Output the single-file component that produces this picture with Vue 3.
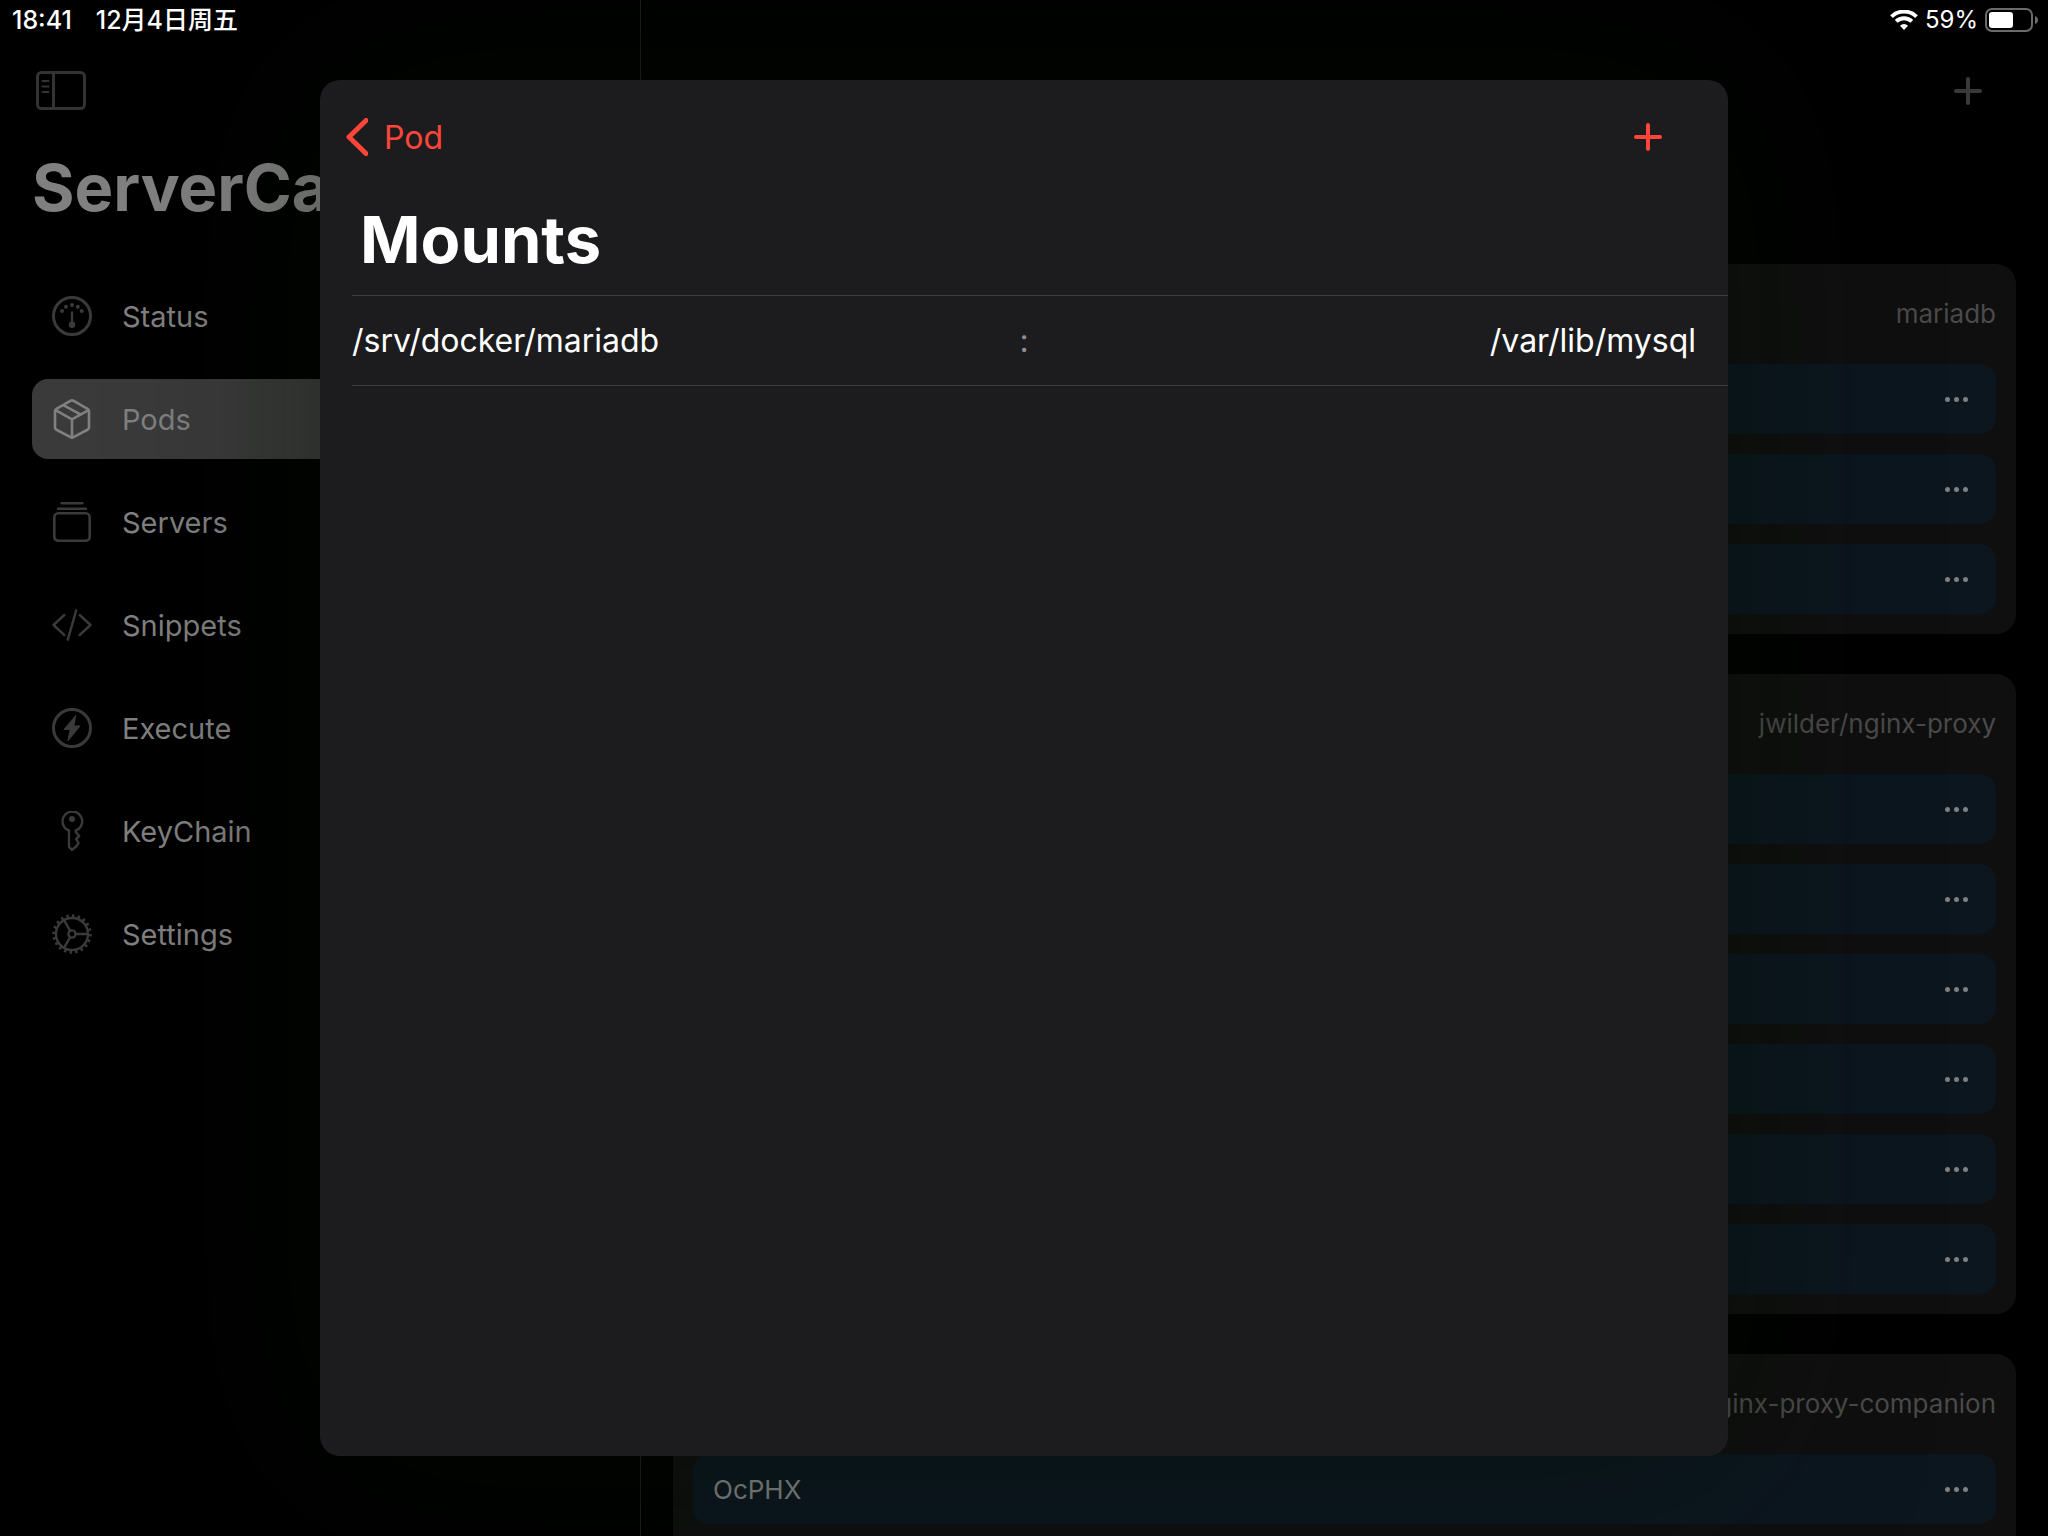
<template>
  <div class="app">
    <header class="statusbar">
      <div class="clock">
        <time>18:41</time>
        <span>12月4日周五</span>
      </div>
      <div class="power">
        <svg class="wifi" viewBox="0 0 28 20" aria-hidden="true">
          <path d="M1.5 6.600a18 18 0 0 1 25 0" />
          <path d="M6.200 11.400a11.200 11.200 0 0 1 15.600 0" />
          <path class="dot" d="M14 20l-4-4.200a5.600 5.600 0 0 1 8 0z" />
        </svg>
        <span class="percent">59%</span>
        <svg class="battery" viewBox="0 0 54 24" aria-hidden="true">
          <rect class="shell" x="1" y="1" width="46" height="22" rx="6" />
          <rect class="level" x="4" y="4" width="24" height="16" rx="3" />
          <path class="nub" d="M50 8q3 1 3 4t-3 4z" />
        </svg>
      </div>
    </header>

    <aside class="sidebar">
      <button class="toggle" aria-label="Toggle sidebar">
        <svg viewBox="0 0 50 40" aria-hidden="true">
          <rect x="1.5" y="1.5" width="47" height="36" rx="4" />
          <path d="M17.5 2v35" />
          <path class="thin" d="M6.500 10h6M6.500 15.500h6M6.500 21h6" />
        </svg>
      </button>
      <h1>ServerCat</h1>
      <nav class="nav">
        <a v-for="item in menu" :key="item.name" href="#" class="nav-item"
          :class="{ active: item.name === current }" @click.prevent="current = item.name">
          <svg viewBox="0 0 40 40" aria-hidden="true">
            <g v-if="item.name === 'Status'">
              <circle cx="20" cy="20" r="18.5" />
              <path class="thin" d="M20 16.5v12" />
              <g class="solid">
                <circle cx="10" cy="15" r="2" /><circle cx="14" cy="10.7" r="2" />
                <circle cx="20" cy="8.9" r="2" /><circle cx="25.8" cy="10.7" r="2" />
                <circle cx="29.7" cy="15" r="2" /><circle cx="20" cy="28.7" r="3.2" />
              </g>
            </g>
            <g v-else-if="item.name === 'Pods'" class="medium">
              <path d="M18.8 1.7q1.2-.7 2.4 0L36 10.2q1 .7 1 2v16.3q0 1.3-1.1 2L20 38.9 4 30.5q-1-.7-1-2V12.2q0-1.3 1-2z" />
              <path d="M3.5 11.2L20 20.3 36.5 11.2M20 20.3V38.5M11.8 6.3L28.800 15.700" />
            </g>
            <g v-else-if="item.name === 'Servers'" class="medium">
              <rect x="2.3" y="11.3" width="35.4" height="27.4" rx="4" />
              <path class="thin" d="M9.5 1.3h21M6 6.7h28" />
            </g>
            <path v-else-if="item.name === 'Snippets'" class="thin"
              d="M12.3 10L1.5 20l10.8 10M27.7 10l10.800 10-10.800 10M24.2 5.300L15.800 34.700" />
            <g v-else-if="item.name === 'Execute'">
              <circle cx="20" cy="20" r="18.5" />
              <path class="solid" d="M23.500 7.200q1-.7.8.6L22.400 17.400h5.300q1 .2.4 1.100L16.500 32.700q-1.200.8-1-.5l2.100-10.200h-5.300q-1-.2-.4-1.100z" />
            </g>
            <g v-else-if="item.name === 'KeyChain'" class="thin">
              <path d="M17 19.500A9.800 9.800 0 1 1 23.700 19.500V21l3.500 4-3 2.800 2.300 4.200-2 3.200L20 38.800l-3-3z" />
              <circle class="solid" cx="20" cy="8" r="3" />
            </g>
            <g v-else class="thin">
              <circle cx="20" cy="20" r="16" />
              <circle class="teeth" cx="20" cy="20" r="18.200" pathLength="60" />
              <circle cx="20" cy="20" r="3.600" />
              <path d="M23.600 20H36M18.200 16.900L12 6.200M18.200 23.100L12 33.800" />
            </g>
          </svg>
          <span>{{ item.name }}</span>
        </a>
      </nav>
    </aside>

    <main class="content">
      <div class="toolbar">
        <button class="add" aria-label="Add pod">
          <svg viewBox="0 0 28 28" aria-hidden="true"><path d="M14 2v24M2 14h24" /></svg>
        </button>
      </div>
      <section v-for="pod in pods" :key="pod.image" class="card">
        <header>{{ pod.image }}</header>
        <div v-for="(name, i) in pod.containers" :key="i" class="container">
          <span>{{ name }}</span>
          <button class="more" aria-label="More">
            <i></i><i></i><i></i>
          </button>
        </div>
      </section>
    </main>

    <div class="overlay">
      <div class="sheet" role="dialog" aria-modal="true" aria-labelledby="sheet-title">
        <div class="sheet-bar">
          <button class="back">
            <svg viewBox="0 0 22 38" aria-hidden="true"><path d="M20 2.500L3 19l17 16.500" /></svg>
            <span>Pod</span>
          </button>
          <button class="add" aria-label="Add mount">
            <svg viewBox="0 0 28 28" aria-hidden="true"><path d="M14 2v24M2 14h24" /></svg>
          </button>
        </div>
        <h2 id="sheet-title">Mounts</h2>
        <ul class="mounts">
          <li v-for="mount in mounts" :key="mount.target">
            <span>{{ mount.source }}</span>
            <span class="colon">:</span>
            <span class="target">{{ mount.target }}</span>
          </li>
        </ul>
      </div>
    </div>
  </div>
</template>

<script setup>
import { ref } from 'vue'

const current = ref('Pods')

const menu = [
  { name: 'Status' },
  { name: 'Pods' },
  { name: 'Servers' },
  { name: 'Snippets' },
  { name: 'Execute' },
  { name: 'KeyChain' },
  { name: 'Settings' },
]

const pods = [
  { image: 'mariadb', containers: ['', '', ''] },
  { image: 'jwilder/nginx-proxy', containers: ['', '', '', '', '', ''] },
  { image: 'nginx-proxy-companion', containers: ['OcPHX', ''] },
]

const mounts = ref([
  { source: '/srv/docker/mariadb', target: '/var/lib/mysql' },
])
</script>

<style>
body { background: #000; }
</style>

<style scoped>
.app {
  position: relative;
  display: grid;
  grid-template-columns: 5fr 11fr;
  height: 100vh;
  overflow: hidden;
  background: #000;
  color: #808080;
  font-family: Inter, "Noto Sans CJK SC", sans-serif;
  font-size: 29px;
}
* { box-sizing: border-box; }
button { padding: 0; border: none; background: none; color: inherit; font: inherit; cursor: pointer; }
svg { display: block; fill: none; stroke: currentColor; stroke-linecap: round; stroke-linejoin: round; }

/* status bar */
.statusbar {
  position: absolute; top: 0; left: 0; right: 0; z-index: 20;
  display: flex; justify-content: space-between; align-items: center;
  height: 40px; padding: 0 9px 0 12px;
  color: #fff; font-size: 25px; line-height: 40px; font-weight: 500;
}
.clock { display: flex; align-items: baseline; gap: 24px; }
.power { display: flex; align-items: center; gap: 7px; }
.percent { font-size: 24px; font-weight: 400; }
.wifi { width: 28px; height: 20px; stroke-width: 4; stroke-linecap: butt; }
.wifi .dot { fill: currentColor; stroke: none; }
.battery { width: 54px; height: 24px; }
.battery .shell { stroke: #6b6b6b; stroke-width: 2; }
.battery .level { fill: #fff; stroke: none; }
.battery .nub { fill: #6b6b6b; stroke: none; }

/* sidebar */
.sidebar { padding: 71px 32px 0; }
.toggle { display: block; margin-left: 4px; color: #333; }
.toggle svg { width: 50px; height: 40px; stroke-width: 3; }
.toggle .thin { stroke-width: 2; }
h1 { margin: 37px 0 48px; font-size: 65px; line-height: 80px; font-weight: 700; }
.nav { display: flex; flex-direction: column; gap: 23px; }
.nav-item {
  display: flex; align-items: center; gap: 30px;
  height: 80px; padding: 0 20px; border-radius: 16px;
  color: inherit; text-decoration: none;
}
.nav-item svg { width: 40px; height: 40px; color: #3a3a3a; stroke-width: 3; }
.nav-item .medium { stroke-width: 2.6; }
.nav-item .thin { stroke-width: 2.4; }
.nav-item .solid { fill: currentColor; stroke: none; }
.nav-item .teeth { stroke-width: 3; stroke-linecap: butt; stroke-dasharray: 1.3 1.7; }
.nav-item.active { background: #3a3a3a; }
.nav-item.active svg { color: #808080; }

/* pods */
.content {
  display: flex; flex-direction: column; gap: 40px;
  min-width: 0; padding: 0 32px; border-left: 1px solid #1c1c1c;
}
.toolbar { flex: none; display: flex; justify-content: flex-end; height: 224px; padding: 77px 34px 0 0; color: #3a3a3a; }
.add { align-self: flex-start; }
.add svg { width: 28px; height: 28px; stroke-width: 4; }
.card {
  flex: none; display: flex; flex-direction: column; gap: 20px;
  padding: 0 20px 20px; border-radius: 20px; background: #0f0f0f;
}
.card header {
  height: 80px; padding-top: 20px;
  color: #4a4a4a; font-size: 26px; line-height: 60px; text-align: right;
}
.container {
  display: flex; justify-content: space-between; align-items: center;
  height: 70px; padding: 0 28px 0 20px; border-radius: 16px;
  background: #0c161f; font-size: 26px;
}
.more { display: flex; gap: 4px; }
.more i { width: 5px; height: 5px; border-radius: 50%; background: currentColor; }

/* sheet */
.overlay {
  position: absolute; inset: 0; z-index: 10;
  display: flex; justify-content: center; padding: 80px 0;
}
.sheet {
  width: 68.75%; border-radius: 20px; background: #1c1c1e; color: #fff;
  box-shadow: 0 0 200px rgba(0, 18, 0, .45);
  font-size: 32px; overflow: hidden;
}
.sheet-bar {
  display: flex; justify-content: space-between; align-items: center;
  height: 114px; padding: 0 66px 0 26px; color: #ff4539;
}
.sheet-bar .add { align-self: center; }
.back { display: flex; align-items: center; gap: 16px; }
.back svg { width: 22px; height: 38px; stroke-width: 5; }
h2 { margin: 0; padding: 6px 40px 15px; font-size: 65px; line-height: 80px; font-weight: 700; }
.mounts { margin: 0 0 0 32px; padding: 0; list-style: none; border-top: 1px solid #3d3d40; }
.mounts li {
  display: grid; grid-template-columns: 1fr auto 1fr; align-items: center;
  height: 90px; padding-right: 32px; border-bottom: 1px solid #3d3d40;
}
.colon { color: #8d8d93; }
.target { text-align: right; }
</style>
